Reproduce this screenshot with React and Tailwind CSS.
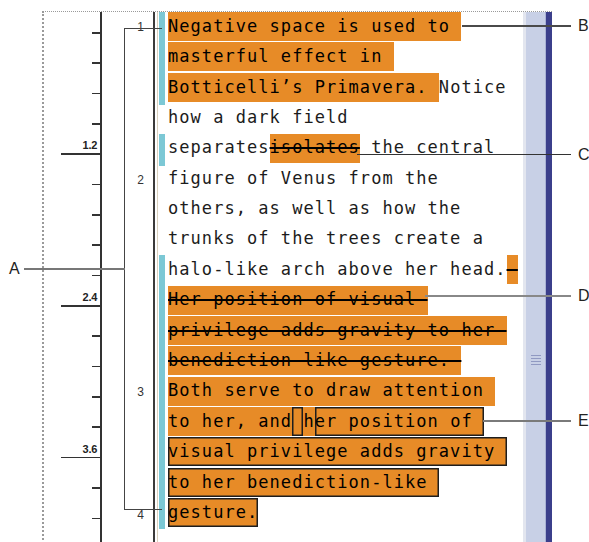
const LINES = [
  [['Negative space is used to ', 'o']],
  [['masterful effect in ', 'o']],
  [['Botticelli’s Primavera. ', 'o'], ['Notice']],
  [['how a dark field']],
  [['separates'], ['isolates', 'os'], [' the central']],
  [['figure of Venus from the']],
  [['others, as well as how the']],
  [['trunks of the trees create a']],
  [['halo-like arch above her head.'], [' ', 'os']],
  [['Her position of visual ', 'os']],
  [['privilege adds gravity to her ', 'os']],
  [['benediction like gesture. ', 'os']],
  [['Both serve to draw attention ', 'o']],
  [['to her, and', 'o'], [' ', 'ob'], ['h', 'o'], ['er position of ', 'ob']],
  [['visual privilege adds gravity ', 'ob']],
  [['to her benediction-like ', 'ob']],
  [['gesture.', 'ob']],
]

const MAJOR = { 4: '1.2', 9: '2.4', 14: '3.6' }

function clsx(...c) {
  return c.filter(Boolean).join(' ')
}

function Segment({ text, kind = '' }) {
  return (
    <span
      className={clsx(
        'flex items-center',
        kind.includes('o') && 'bg-[#e78b27] text-black',
        kind.includes('b') && 'shadow-[inset_0_0_0_1.5px_#1e1e1e]'
      )}
    >
      <span
        className={clsx(
          'whitespace-pre',
          kind.includes('s') && 'line-through decoration-[1.5px] decoration-black'
        )}
      >
        {text}
      </span>
    </span>
  )
}

function Ruler() {
  const rows = Array.from({ length: 18 }, (_, k) => k)
  return (
    <div className="w-[58px] shrink-0 border-r-2 border-[#333] flex flex-col items-end">
      <div className="h-[20px] shrink-0" />
      {rows.map((k) => (
        <div key={k} className="h-[30.35px] shrink-0 flex flex-col items-end w-full">
          <div className={clsx('h-[1.5px] bg-[#333]', MAJOR[k] ? 'w-[39px]' : 'w-[8px]')} />
          {MAJOR[k + 1] && (
            <div className="mt-auto pb-[3px] pr-[3px] text-[11px] leading-[10px] font-bold tracking-[-0.3px] text-[#222] font-['Liberation_Sans',sans-serif]">
              {MAJOR[k + 1]}
            </div>
          )}
        </div>
      ))}
    </div>
  )
}

function Numbers() {
  return (
    <div className="w-[53px] shrink-0 border-r-2 border-[#3a3a3a] flex flex-col items-end pr-[9px] text-[12px] leading-[12px] text-[#333] font-['Liberation_Sans',sans-serif]">
      <div className="mt-[9px]">1</div>
      <div className="mt-[141px]">2</div>
      <div className="mt-[200px]">3</div>
      <div className="mt-[111px]">4</div>
    </div>
  )
}

function ChangeBars() {
  return (
    <div className="w-[13px] shrink-0 flex">
      <div className="w-[2px]" />
      <div className="w-px bg-[#d9d0bd]" />
      <div className="w-px" />
      <div className="w-[6px] flex flex-col">
        <div className="h-[93px] bg-[#7cc8d5]" />
        <div className="h-[29px]" />
        <div className="h-[32px] bg-[#7cc8d5]" />
        <div className="h-[89px]" />
        <div className="h-[274px] bg-[#7cc8d5]" />
      </div>
      <div className="w-[3px]" />
    </div>
  )
}

function TextColumn() {
  return (
    <div className="w-[355px] shrink-0 flex flex-col text-[17px] tracking-[1.05px] text-[#1c1c1c] font-['DejaVu_Sans_Mono',monospace]">
      {LINES.map((line, i) => (
        <div key={i} className="h-[30.4px] shrink-0 pb-[1.4px] flex">
          {line.map(([t, k], j) => (
            <Segment key={j} text={t} kind={k} />
          ))}
        </div>
      ))}
    </div>
  )
}

function Scrollbar() {
  return (
    <div className="w-[29px] shrink-0 flex">
      <div className="w-[3px] bg-[#e3e6ef]" />
      <div className="w-[19px] bg-[#c8d0e6] flex flex-col items-center">
        <div className="mt-[343px] flex flex-col gap-[2px]">
          <div className="w-[10px] h-px bg-[#9099c2]" />
          <div className="w-[10px] h-px bg-[#9099c2]" />
          <div className="w-[10px] h-px bg-[#9099c2]" />
          <div className="w-[10px] h-px bg-[#9099c2]" />
        </div>
      </div>
      <div className="w-px bg-[#a9b2d4]" />
      <div className="w-[6px] bg-[#3b3f8b]" />
    </div>
  )
}

function Leader({ top, left, right = 571, color, label }) {
  return (
    <>
      <div
        className="absolute h-[1.5px]"
        style={{ top, left, width: right - left, background: color }}
      />
      {label && (
        <div
          className="absolute text-[16px] leading-[16px] text-[#222] font-['Liberation_Sans',sans-serif]"
          style={{ top: top - 7, left: 578 }}
        >
          {label}
        </div>
      )}
    </>
  )
}

export default function App() {
  return (
    <div className="relative w-[589px] h-[542px] overflow-hidden bg-white">
      <div className="pl-[42px] pt-[11px] h-full">
        <div className="w-[510px] h-[540px] border-l-2 border-t border-dotted border-[#9a9a9a] flex">
          <Ruler />
          <Numbers />
          <ChangeBars />
          <TextColumn />
          <Scrollbar />
        </div>
      </div>

      {/* bracket for A */}
      <div className="absolute left-[124px] top-[28px] w-[38px] h-[482px] border-l-[1.5px] border-t-[1.5px] border-b-[1.5px] border-[#444]" />
      <div className="absolute left-[24px] top-[268px] w-[101px] h-[1.5px] bg-[#777]" />
      <div className="absolute left-[9px] top-[261px] text-[16px] leading-[16px] text-[#222] font-['Liberation_Sans',sans-serif]">A</div>

      <Leader top={25} left={462} color="#4a4a4a" label="B" />
      <Leader top={153.5} left={357} color="#333" label="C" />
      <Leader top={295} left={425} color="#888" label="D" />
      <Leader top={420} left={483} color="#7a7a7a" label="E" />
    </div>
  )
}
